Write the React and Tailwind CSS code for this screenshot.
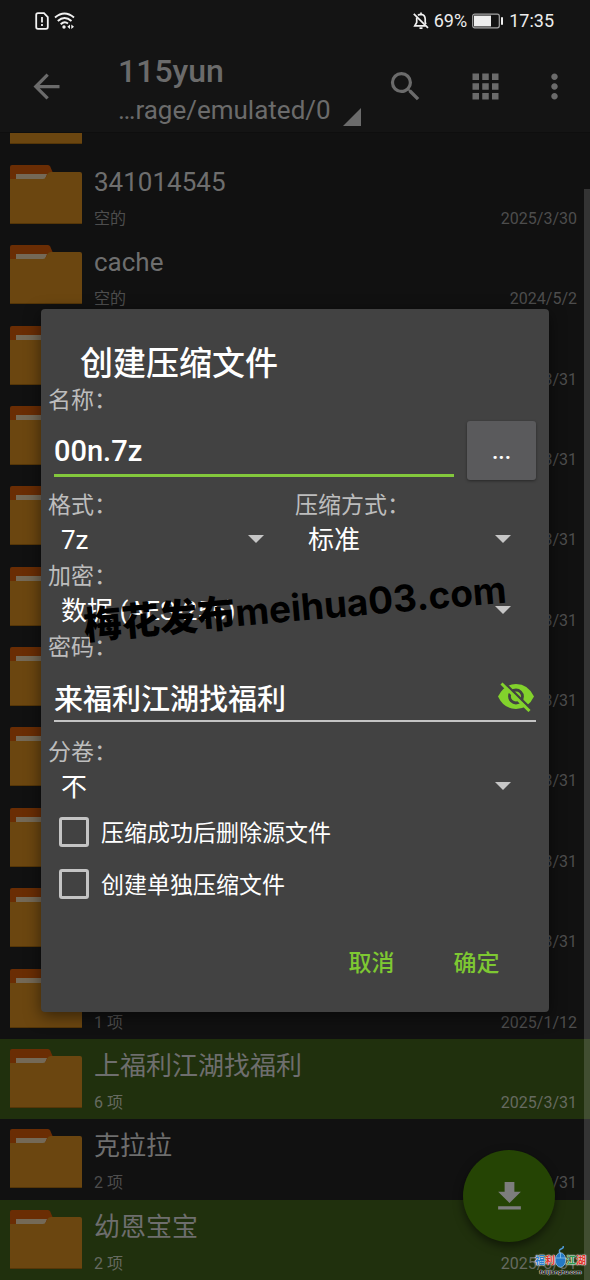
import { useState } from 'react'
import { MdApps, MdArrowBack, MdFileDownload, MdMoreVert, MdSearch } from 'react-icons/md'

const files = [
  { name: '341014545', info: '空的', date: '2025/3/30' },
  { name: 'cache', info: '空的', date: '2024/5/2' },
  { date: '2025/3/31' },
  { date: '2025/3/31' },
  { date: '2025/3/31' },
  { date: '2025/3/31' },
  { date: '2025/3/31' },
  { date: '2025/3/31' },
  { date: '2025/3/31' },
  { date: '2025/3/31' },
  { info: '1 项', date: '2025/1/12' },
  { name: '上福利江湖找福利', info: '6 项', date: '2025/3/31', selected: true },
  { name: '克拉拉', info: '2 项', date: '2025/3/31' },
  { name: '幼恩宝宝', info: '2 项', date: '2025/3/31', selected: true },
]

const FolderIcon = () => (
  <svg className="h-[59px] w-[72px] shrink-0" viewBox="0 0 72 59" aria-hidden="true">
    <path d="M0 2Q0 0 2 0H38Q39.500 0 40.200 1.500L43 8V20H0Z" fill="#6a2d04" />
    <path d="M6 9H37L35 14H6Z" fill="#746957" />
    <path d="M0 14H33Q35 14 36 12L37.500 9Q38.500 7 41 7H70Q72 7 72 9V59H0Z" fill="#6b4610" />
    <path d="M0 58H72V59H0Z" fill="#553608" />
  </svg>
)

const SimIcon = () => (
  <svg className="h-[18px] w-[14px]" viewBox="0 0 14 18" fill="none" aria-hidden="true">
    <path d="M3 1.200H9L12.800 5V15Q12.800 16.800 11 16.800H3Q1.200 16.800 1.200 15V3Q1.200 1.200 3 1.200Z" stroke="#f2f2f2" strokeWidth="1.800" />
    <path d="M7 5V10.500M7 12V14" stroke="#f2f2f2" strokeWidth="1.800" />
  </svg>
)

const WifiIcon = () => (
  <svg className="h-[18px] w-[21px]" viewBox="0 0 21 18" fill="none" stroke="#f2f2f2" strokeWidth="1.900" aria-hidden="true">
    <path d="M1 5.500Q10.500-2.500 20 5.500M3.800 9Q10.500 3 17.500 9M6.700 12.200Q10.500 8.500 14 11.500" />
    <circle cx="10" cy="15" r="1.700" fill="#f2f2f2" stroke="none" />
    <path d="M16 12.500V17L13.300 14.700ZM17.300 12.500V17L20 14.700Z" fill="#f2f2f2" stroke="none" />
  </svg>
)

const MutedBellIcon = () => (
  <svg className="h-[18px] w-4" viewBox="0 0 16 18" fill="none" stroke="#f2f2f2" strokeWidth="1.700" aria-hidden="true">
    <path d="M5 3.300Q6 2.400 8 2.400Q12 2.600 12.200 7V10.500L13 12M3.700 5.500V10.500L1.800 13.800H12.500M8 2.400V.600M6.500 16.200H9.500" />
    <path d="M.800 1.800L15 15.800" />
  </svg>
)

const BatteryIcon = () => (
  <svg className="h-4 w-8" viewBox="0 0 32 16" aria-hidden="true">
    <rect x=".700" y="1.200" width="26.600" height="13.600" rx="2" fill="none" stroke="#a5a5a5" strokeWidth="1.200" />
    <rect x="2" y="2.600" width="17" height="10.800" fill="#eee" />
    <rect x="29" y="4" width="2" height="8" rx="1" fill="#eee" />
  </svg>
)

const HiddenEyeIcon = () => (
  <svg className="h-[30px] w-9" viewBox="0 0 36 30" aria-hidden="true">
    <path d="M0 14.500Q6 2 18 2T36 14.500Q30 27 18 27T0 14.500Z" fill="#82d22c" />
    <circle cx="18" cy="14.500" r="6.500" fill="none" stroke="#424242" strokeWidth="2.800" />
    <path d="M5.500 0L34 28" stroke="#424242" strokeWidth="2.500" />
    <path d="M3.500 1.500L31.500 29" stroke="#82d22c" strokeWidth="3" />
  </svg>
)

const MouseIcon = () => (
  <svg className="h-[22px] w-[11px]" viewBox="0 0 11 22" aria-hidden="true">
    <path d="M5.500 8Q3 4 6 3T8 0" fill="none" stroke="#4f9ad6" strokeWidth="1.500" />
    <ellipse cx="5.500" cy="14" rx="5.200" ry="7.300" fill="#2479c4" stroke="#b9dcf5" strokeWidth=".600" />
    <path d="M.800 12H10.200M5.500 7V12" stroke="#8cc4ee" strokeWidth=".800" />
  </svg>
)

const FileRow = ({ file }) => (
  <li className={`flex gap-3 pl-[10px] pr-[13px] ${file.selected ? 'bg-[#20300d]' : ''}`}>
    <div className="pt-[10px]">
      <FolderIcon />
    </div>
    <div className="flex-1 pt-2">
      <p className="h-[38px] text-[26px] leading-[38px] text-[#6e6e6e]">{file.name}</p>
      <div className={`mt-2 flex justify-between text-base leading-5 ${file.selected ? 'text-[#666a60]' : 'text-[#4d4d4d]'}`}>
        <span>{file.info}</span>
        <span>{file.date}</span>
      </div>
    </div>
  </li>
)

const Label = ({ id, children }) => (
  <label htmlFor={id} className="block h-[30px] text-[23px] leading-[32px] text-[#bdbdbd]">
    {children}
  </label>
)

const Dropdown = ({ id, label, options }) => (
  <div>
    <Label id={id}>{label}</Label>
    <div className="grid h-[41px] items-center">
      <select
        id={id}
        className="col-start-1 row-start-1 h-full w-full appearance-none bg-transparent pl-[13px] text-[26px] text-white outline-none"
      >
        {options.map((o) => (
          <option key={o}>{o}</option>
        ))}
      </select>
      <svg className="pointer-events-none col-start-1 row-start-1 mb-[3px] mr-[31px] h-2 w-4 justify-self-end" viewBox="0 0 16 8" aria-hidden="true">
        <path d="M0 0H16L8 8Z" fill="#c6c6c6" />
      </svg>
    </div>
  </div>
)

const CheckRow = ({ children }) => (
  <label className="flex h-[52px] items-start gap-3 pl-[11px] pt-[9px] text-[23px] leading-[34px] text-white">
    <input
      type="checkbox"
      className="size-[30px] appearance-none rounded-[3px] border-3 border-[#c4c4c4] checked:bg-[#82d22c]"
    />
    <span>{children}</span>
  </label>
)

const ArchiveDialog = () => {
  const [name, setName] = useState('00n.7z')
  const [password, setPassword] = useState('来福利江湖找福利')

  return (
    <form
      role="dialog"
      aria-labelledby="dialog-title"
      onSubmit={(e) => e.preventDefault()}
      className="w-full rounded-[4px] bg-[#424242] px-[7px] pt-[30px] shadow-[0_4px_16px_rgba(0,0,0,0.5)]"
    >
      <h2 id="dialog-title" className="h-[46px] pl-8 text-[33px] font-medium leading-[50px] text-white">
        创建压缩文件
      </h2>

      <Label id="name">名称：</Label>
      <div className="flex h-[75px] items-start gap-[13px] px-[6px]">
        <input
          id="name"
          value={name}
          onChange={(e) => setName(e.target.value)}
          className="mt-3 h-[50px] min-w-0 flex-1 border-b-3 border-[#83c83c] bg-transparent text-[29px] font-medium text-white outline-none"
        />
        <button
          type="button"
          aria-label="浏览"
          className="mt-[6px] h-[59px] w-[69px] rounded-[3px] bg-[#5a5a5c] pt-1 text-[23px] font-medium text-white shadow-[0_1px_3px_rgba(0,0,0,0.4)]"
        >
          ...
        </button>
      </div>

      <div className="grid grid-cols-2">
        <Dropdown id="format" label="格式：" options={['7z', 'zip', 'tar']} />
        <Dropdown id="level" label="压缩方式：" options={['标准', '最快', '最好']} />
      </div>
      <Dropdown id="encryption" label="加密：" options={['数据 (AES-256)']} />

      <Label id="password">密码：</Label>
      <div className="h-[75px] px-[6px] pt-3">
        <div className="flex h-12 items-center border-b-2 border-[#c4c4c4]">
          <input
            id="password"
            value={password}
            onChange={(e) => setPassword(e.target.value)}
            className="h-full min-w-0 flex-1 bg-transparent text-[29px] font-medium text-white outline-none"
          />
          <button type="button" aria-label="隐藏密码" className="pr-[2px]">
            <HiddenEyeIcon />
          </button>
        </div>
      </div>

      <Dropdown id="split" label="分卷：" options={['不', '10 MB', '100 MB']} />

      <CheckRow>压缩成功后删除源文件</CheckRow>
      <CheckRow>创建单独压缩文件</CheckRow>

      <div className="flex h-[100px] items-center justify-end pr-[13px] pt-1 text-[23px] font-medium text-[#7ec832]">
        <button type="button" className="h-12 w-[105px]">取消</button>
        <button type="submit" className="h-12 w-[105px]">确定</button>
      </div>
    </form>
  )
}

const App = () => {
  return (
    <div
      lang="zh-CN"
      className="relative flex min-h-screen flex-col overflow-hidden bg-[#111] font-['Roboto','Noto_Sans_CJK_SC',sans-serif]"
    >
      <header className="border-b border-[#0e0e0e] bg-[#141414] text-[#6b6b6b]">
        <div className="flex h-[41px] items-center justify-between pl-[35px] pr-9 text-[18px] text-[#ededed]">
          <div className="flex items-center gap-[5px]">
            <SimIcon />
            <WifiIcon />
          </div>
          <div className="flex items-center gap-[5px]">
            <MutedBellIcon />
            <span>69%</span>
            <BatteryIcon />
            <span>17:35</span>
          </div>
        </div>

        <div className="flex h-[91px] items-center pr-[7px]">
          <button aria-label="返回" className="flex w-[92px] justify-center">
            <MdArrowBack size={39} />
          </button>
          <div className="flex flex-1 items-end pl-[26px] pt-[6px]">
            <div>
              <h1 className="text-[32px] font-medium leading-[40px]">115yun</h1>
              <p className="text-[26px] leading-[38px]">…rage/emulated/0</p>
            </div>
            <svg className="mb-[3px] ml-3 size-[18px]" viewBox="0 0 18 18" aria-hidden="true">
              <path d="M18 0V18H0Z" fill="currentColor" />
            </svg>
          </div>
          <button aria-label="搜索" className="flex w-20 justify-center">
            <MdSearch size={39} />
          </button>
          <button aria-label="视图" className="flex w-20 justify-center">
            <MdApps size={39} />
          </button>
          <button aria-label="更多" className="flex w-[58px] justify-center">
            <MdMoreVert size={39} />
          </button>
        </div>
      </header>

      <ul className="grid flex-1 grid-rows-[22px_repeat(14,minmax(0,1fr))]">
        <li className="flex items-end overflow-hidden pb-[11px] pl-[10px]">
          <FolderIcon />
        </li>
        {files.map((file, i) => (
          <FileRow key={i} file={file} />
        ))}
      </ul>

      <div className="absolute bottom-0 right-0 top-[189px] w-[6px] bg-white/15" />

      <button
        aria-label="粘贴"
        className="absolute bottom-[38px] right-[35px] flex size-[92px] items-center justify-center rounded-full bg-[#254404] text-[#7d7d7d] shadow-[0_4px_10px_rgba(0,0,0,0.5)]"
      >
        <MdFileDownload size={39} />
      </button>

      <div className="absolute inset-0 flex items-center px-[41px] pt-[41px]">
        <ArchiveDialog />
      </div>

      {/* site watermarks */}
      <div className="pointer-events-none absolute left-[83px] top-[580px] flex -rotate-[5deg] items-center whitespace-nowrap leading-[56px] text-black">
        <span className="text-[38px] font-black">梅花发布</span>
        <span className="font-['Inter',sans-serif] text-[37px] font-bold">meihua03.com</span>
      </div>

      <div className="pointer-events-none absolute bottom-1 right-1 flex flex-col items-center font-bold">
        <div className="flex items-end text-[10px] leading-[14px] [text-shadow:0_0_1px_#fff,0_0_1px_#fff,0_0_2px_#fff]">
          <span className="text-[#2d7fd0]">福</span>
          <span className="text-[#e0342c]">利</span>
          <MouseIcon />
          <span className="text-[#2f9a4c]">江</span>
          <span className="text-[#e0342c]">湖</span>
        </div>
        <span className="text-[6px] leading-[8px] text-black [text-shadow:0_0_1px_#fff,0_0_1px_#fff,0_0_1px_#fff]">
          fulijianghu.com
        </span>
      </div>
    </div>
  )
}

export default App
